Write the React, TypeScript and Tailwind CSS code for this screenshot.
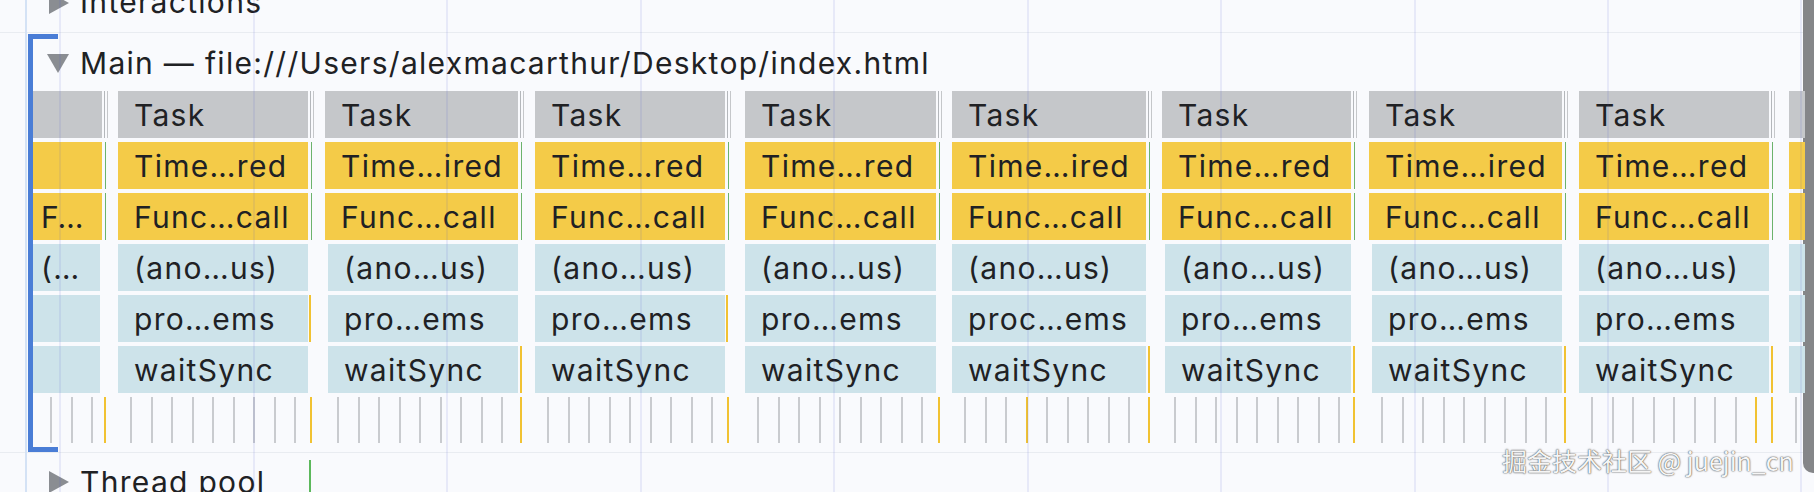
import React from "react";

type Col = {
  s: number;
  e: number;
  texts: string[];
  blueStart?: number;
  proMark?: boolean;
  waitMark?: boolean;
  partial?: boolean;
};

const COLS: Col[] = [
  { s: 33, e: 102, texts: ["", "", "F…", "(…", "", ""], partial: true },
  { s: 118, e: 308, texts: ["Task", "Time…red", "Func…call", "(ano…us)", "pro…ems", "waitSync"], proMark: true },
  { s: 325, e: 518, blueStart: 328, texts: ["Task", "Time…ired", "Func…call", "(ano…us)", "pro…ems", "waitSync"], waitMark: true },
  { s: 535, e: 725, texts: ["Task", "Time…red", "Func…call", "(ano…us)", "pro…ems", "waitSync"], proMark: true },
  { s: 745, e: 936, texts: ["Task", "Time…red", "Func…call", "(ano…us)", "pro…ems", "waitSync"] },
  { s: 952, e: 1146, texts: ["Task", "Time…ired", "Func…call", "(ano…us)", "proc…ems", "waitSync"], waitMark: true },
  { s: 1162, e: 1351, blueStart: 1165, texts: ["Task", "Time…red", "Func…call", "(ano…us)", "pro…ems", "waitSync"], waitMark: true },
  { s: 1369, e: 1562, blueStart: 1372, texts: ["Task", "Time…ired", "Func…call", "(ano…us)", "pro…ems", "waitSync"], waitMark: true },
  { s: 1579, e: 1769, texts: ["Task", "Time…red", "Func…call", "(ano…us)", "pro…ems", "waitSync"], waitMark: true },
  { s: 1789, e: 1799, texts: ["", "", "", "", "", ""], partial: true },
];

const ROW_BG = ["bg-[#c5c7ca]", "bg-[#f4cb48]", "bg-[#f4cb48]", "bg-[#cde3ea]", "bg-[#cde3ea]", "bg-[#cde3ea]"];

const GRID = [59, 252.5, 446, 639.5, 833, 1026.5, 1220, 1413.5, 1607, 1800];

// small tasks in the bottom lane
const ticks: { x: number; y: boolean }[] = [];
COLS.forEach((c, i) => {
  if (i === COLS.length - 1) {
    ticks.push({ x: 1795, y: false });
    return;
  }
  const first = i === 0 ? 50 : c.s + 12;
  for (let x = first; x < c.e - 8; x += 20.5) {
    const yellow = (x > 1012 && x < 1026) || (x > 1750 && x < 1764);
    ticks.push({ x: Math.round(x), y: yellow });
  }
  ticks.push({ x: c.e + 2, y: true });
});

function Tri({ down }: { down?: boolean }) {
  return down ? (
    <svg width="22" height="19" viewBox="0 0 22 19" className="shrink-0">
      <polygon points="0,0 22,0 11,19" fill="#8a8d92" />
    </svg>
  ) : (
    <svg width="20" height="22" viewBox="0 0 20 22" className="shrink-0">
      <polygon points="0,0 20,11 0,22" fill="#8a8d92" />
    </svg>
  );
}

function FlameRow({ row }: { row: number }) {
  const blue = row >= 3;
  return (
    <div className="relative h-[47px] mb-[4px]">
      {COLS.map((c, i) => {
        const start = blue && c.blueStart ? c.blueStart : c.s;
        const end = blue && c.partial && i === 0 ? 100 : c.e;
        return (
          <React.Fragment key={i}>
            <div
              className={`absolute top-0 h-[47px] overflow-hidden whitespace-nowrap ${
                c.partial && i === 0 ? "pl-[8px]" : "pl-[16px]"
              } leading-[48px] text-[30px] tracking-[1.3px] text-[#202124] ${ROW_BG[row]}`}
              style={{ left: start, width: end - start }}
            >
              {c.texts[row]}
            </div>
            {row === 0 && i < COLS.length - 1 && (
              <>
                <div className="absolute top-0 h-[47px] w-[1px] bg-[#b4b7bb]" style={{ left: c.e + 2 }} />
                <div className="absolute top-0 h-[47px] w-[1px] bg-[#c5c7ca]" style={{ left: c.e + 5 }} />
              </>
            )}
            {(row === 1 || row === 2) && i < COLS.length - 1 && (
              <div className="absolute top-0 h-[47px] w-[1px] bg-[#6cb36c]" style={{ left: c.e + 3 }} />
            )}
            {row === 4 && c.proMark && (
              <div className="absolute top-0 h-[47px] w-[2px] bg-[#f1c232]" style={{ left: c.e + 1 }} />
            )}
            {row === 5 && c.waitMark && (
              <div className="absolute top-0 h-[47px] w-[2px] bg-[#f1c232]" style={{ left: c.e + 2 }} />
            )}
          </React.Fragment>
        );
      })}
    </div>
  );
}

export default function App() {
  return (
    <div className="relative flex w-[1814px] h-[492px] overflow-hidden bg-[#f9fafd] font-[Inter,'Noto_Sans',sans-serif] text-[#202124]">
      <div className="relative flex-1 flex flex-col">
        {/* Interactions */}
        <div className="h-[32px] overflow-hidden">
          <div className="flex items-center gap-[11px] h-[29px] -mt-[12px] pl-[49px] text-[30px] tracking-[1.3px]">
            <Tri />
            <span>Interactions</span>
          </div>
        </div>
        <div className="h-[1px] bg-[#e9ecf1]" />

        {/* Main thread */}
        <div className="relative h-[419px]">
          <div className="absolute left-[28px] top-[1px] w-[30px] h-[418px] border-l-[5px] border-t-[5px] border-b-[5px] border-[#4a7dd6]" />
          <div className="flex items-center gap-[11px] h-[58px] pt-[3px] pl-[47px] text-[30px] tracking-[1.3px]">
            <Tri down />
            <span>Main — file:///Users/alexmacarthur/Desktop/index.html</span>
          </div>
          {[0, 1, 2, 3, 4, 5].map((r) => (
            <FlameRow key={r} row={r} />
          ))}
          <div className="relative h-[48px]">
            {ticks.map((t, i) => (
              <div
                key={i}
                className={`absolute top-0 h-[46px] w-[1.5px] ${t.y ? "bg-[#f1c232]" : "bg-[#c9cbcf]"}`}
                style={{ left: t.x }}
              />
            ))}
          </div>
        </div>
        <div className="h-[1px] bg-[#e9ecf1]" />

        {/* Thread pool */}
        <div className="flex items-center gap-[11px] h-[38px] pt-[20px] pl-[49px] text-[30px] tracking-[1.3px]">
          <Tri />
          <span>Thread pool</span>
        </div>
        <div className="absolute left-[309px] top-[460px] w-[2px] h-[32px] bg-[#5cb85c]" />

        {/* grid overlay */}
        <div className="absolute left-[25px] top-0 w-[2px] h-full bg-[#d4e2f5]" />
        {GRID.map((x) => (
          <div
            key={x}
            className="absolute top-0 w-[2px] h-full bg-[#4a5ad0]/10 pointer-events-none"
            style={{ left: x }}
          />
        ))}
      </div>

      {/* scrollbar */}
      <div className="w-[11px] flex flex-col">
        <div className="h-[473px] bg-[#858689] rounded-bl-[10px]" />
      </div>

      <div className="absolute left-[1502px] top-[442px] text-[25px] leading-[36px] text-[#f5f5f5] font-['Noto_Sans_CJK_SC','Noto_Sans',sans-serif] [text-shadow:0_0_1px_#444,0_0_2px_#666]">
        掘金技术社区 @ juejin_cn
      </div>
    </div>
  );
}
